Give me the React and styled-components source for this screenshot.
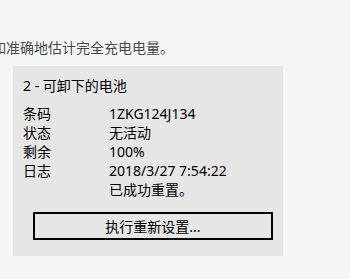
import styled, { createGlobalStyle } from "styled-components";

const GlobalStyle = createGlobalStyle`
  html, body {
    margin: 0;
    padding: 0;
    background: #f4f6f5;
  }
  body {
    font-family: "Noto Sans", "Noto Sans CJK SC", sans-serif;
    font-size: 14px;
  }
`;

const rows = [
  { label: "条码", value: ["1ZKG124J134"] },
  { label: "状态", value: ["无活动"] },
  { label: "剩余", value: ["100%"] },
  { label: "日志", value: ["2018/3/27 7:54:22", "已成功重置。"] },
];

const App = () => {
  return (
    <Page>
      <GlobalStyle />
      <Intro>如准确地估计完全充电电量。</Intro>
      <Panel>
        <Title>2 - 可卸下的电池</Title>
        <Details>
          {rows.map((row) => (
            <Row key={row.label}>
              <Label>{row.label}</Label>
              <Value>
                {row.value.map((line) => (
                  <div key={line}>{line}</div>
                ))}
              </Value>
            </Row>
          ))}
        </Details>
        <ResetButton>执行重新设置...</ResetButton>
      </Panel>
    </Page>
  );
};
export default App;

const Page = styled.div`
  width: 350px;
  height: 279px;
  overflow: hidden;
  padding-top: 38px;
  box-sizing: border-box;
`;
const Intro = styled.p`
  margin: 0 0 0 -8px;
  line-height: 19px;
  color: #4a4a4a;
  white-space: nowrap;
`;
const Panel = styled.section`
  margin: 9px 0 0 13px;
  width: 270px;
  box-sizing: border-box;
  padding: 10px 10px 16px;
  background: #e6e6e6;
  color: #000;
`;
const Title = styled.div`
  line-height: 19px;
`;
const Details = styled.div`
  margin-top: 9px;
  display: flex;
  flex-direction: column;
`;
const Row = styled.div`
  display: flex;
  line-height: 19px;
`;
const Label = styled.div`
  width: 86px;
  flex-shrink: 0;
`;
const Value = styled.div`
  display: flex;
  flex-direction: column;
`;
const ResetButton = styled.button`
  display: block;
  margin: 13px 0 0 10px;
  width: 240px;
  height: 28px;
  padding: 0;
  border: 2px solid #000;
  background: #e6e6e6;
  color: #000;
  font: inherit;
  line-height: 19px;
`;
